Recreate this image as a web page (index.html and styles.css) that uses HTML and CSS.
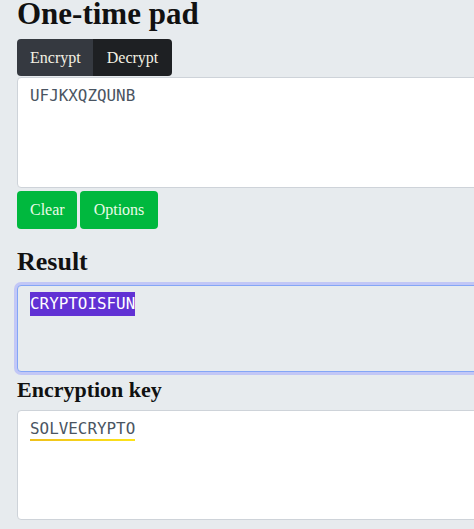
FILE: index.html
```html
<!DOCTYPE html>
<html lang="en">
<head>
<meta charset="utf-8">
<title>One-time pad</title>
<link rel="stylesheet" href="styles.css">
</head>
<body>
<main class="page">
  <h1 class="title">One-time pad</h1>
  <div class="mode-group">
    <button class="mode mode-active">Encrypt</button>
    <button class="mode mode-dark">Decrypt</button>
  </div>
  <div class="field field-input">UFJKXQZQUNB</div>
  <div class="actions">
    <button class="btn-green">Clear</button>
    <button class="btn-green">Options</button>
  </div>
  <h2 class="section">Result</h2>
  <div class="field field-result"><span class="selected">CRYPTOISFUN</span></div>
  <h3 class="section-sm">Encryption key</h3>
  <div class="field field-key"><span class="key-mark">SOLVECRYPTO</span></div>
</main>
</body>
</html>
```
FILE: styles.css
```css
html, body {
  margin: 0;
  padding: 0;
  background: #e7ebee;
  overflow: hidden;
}
.page {
  display: flex;
  flex-direction: column;
  align-items: flex-start;
  padding: 0 0 0 17px;
  width: 560px;
  font-family: "Liberation Serif", serif;
  color: #111;
}
.title {
  margin: -6px 0 0 0;
  font-size: 31px;
  line-height: 40px;
  font-weight: 700;
}
.mode-group {
  display: flex;
  margin-top: 5px;
}
.mode {
  font-family: "Liberation Serif", serif;
  font-size: 16px;
  color: #f4f1e4;
  border: none;
  height: 37px;
  padding: 0 13px;
  cursor: pointer;
}
.mode-active {
  background: #353940;
  border-radius: 4px 0 0 4px;
  width: 76px;
}
.mode-dark {
  background: #1e2023;
  border-radius: 0 4px 4px 0;
  width: 79px;
}
.field {
  box-sizing: border-box;
  width: 100%;
  background: #fff;
  border: 1px solid #ced3d9;
  border-radius: 4px;
  padding: 6px 12px;
  font-family: "DejaVu Sans Mono", monospace;
  font-size: 15.9px;
  line-height: 24px;
  color: #4a5562;
}
.field-input {
  height: 111px;
  margin-top: 1px;
}
.actions {
  display: flex;
  gap: 3px;
  margin-top: 3px;
}
.btn-green {
  font-family: "Liberation Serif", serif;
  font-size: 16px;
  color: #eafbe8;
  background: #00b83e;
  border: none;
  border-radius: 4px;
  height: 38px;
  padding: 0 13px;
}
.btn-green:first-child { width: 60px; }
.btn-green:last-child { width: 78px; }
.section {
  margin: 16px 0 0 0;
  font-size: 26px;
  line-height: 34px;
  font-weight: 700;
}
.field-result {
  margin-top: 6px;
  height: 87px;
  background: #e7ebee;
  border-color: #84a6f6;
  box-shadow: 0 0 0 3px #c2c7f6;
  color: #fff;
}
.selected {
  background: #6131d4;
  color: #fff;
  display: inline-block;
  line-height: 24px;
}
.section-sm {
  margin: 3px 0 0 0;
  font-size: 22px;
  line-height: 30px;
  font-weight: 700;
}
.field-key {
  margin-top: 5px;
  height: 110px;
}
.key-mark {
  display: inline-block;
  line-height: 20px;
  border-bottom: 2px solid;
  border-image: linear-gradient(90deg, #eebf1c, #fde41a) 1;
}
```
